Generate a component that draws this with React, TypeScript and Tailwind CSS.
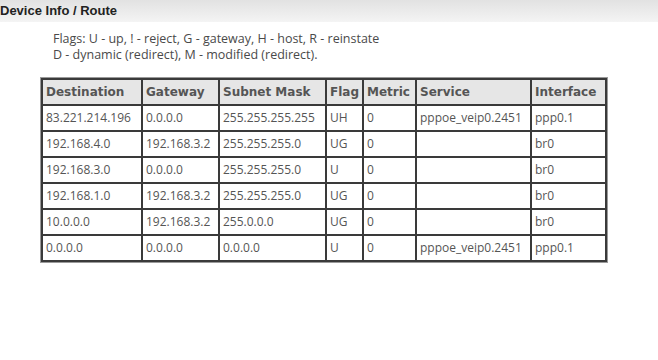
const rows = [
  ['83.221.214.196', '0.0.0.0', '255.255.255.255', 'UH', '0', 'pppoe_veip0.2451', 'ppp0.1'],
  ['192.168.4.0', '192.168.3.2', '255.255.255.0', 'UG', '0', '', 'br0'],
  ['192.168.3.0', '0.0.0.0', '255.255.255.0', 'U', '0', '', 'br0'],
  ['192.168.1.0', '192.168.3.2', '255.255.255.0', 'UG', '0', '', 'br0'],
  ['10.0.0.0', '192.168.3.2', '255.0.0.0', 'UG', '0', '', 'br0'],
  ['0.0.0.0', '0.0.0.0', '0.0.0.0', 'U', '0', 'pppoe_veip0.2451', 'ppp0.1'],
];

const columns = [
  { label: 'Destination', w: 'w-[100px]' },
  { label: 'Gateway', w: 'w-[77px]' },
  { label: 'Subnet Mask', w: 'w-[107px]' },
  { label: 'Flag', w: 'w-[37px]' },
  { label: 'Metric', w: 'w-[53px]' },
  { label: 'Service', w: 'w-[115px]' },
  { label: 'Interface', w: 'w-[75px]' },
];

export default function App() {
  return (
    <div className="w-[658px] h-[360px] bg-white overflow-hidden font-['Open_Sans',sans-serif]">
      {/* page title bar */}
      <div className="h-[22px] bg-gradient-to-b from-[#e2e2e2] to-[#f4f4f4] flex items-center">
        <span className="font-['Liberation_Sans',Arial,sans-serif] font-bold text-[13px] text-[#222]">
          Device Info / Route
        </span>
      </div>

      <div className="pl-[53px] pt-[9px] text-[12.5px] leading-[16px] text-[#4a4a4a]">
        <p>Flags: U - up, ! - reject, G - gateway, H - host, R - reinstate</p>
        <p>D - dynamic (redirect), M - modified (redirect).</p>
      </div>

      <div className="ml-[40px] mt-[14px] w-fit border border-[#9a9a9a]">
        <table className="table-fixed border-collapse text-[12px] text-[#555]">
          <thead>
            <tr className="h-[26px] bg-[#e6e6e6]">
              {columns.map((c) => (
                <th
                  key={c.label}
                  className={`${c.w} border-2 border-[#3a3a3a] px-[3px] text-left font-['DejaVu_Sans',Verdana,sans-serif] font-bold text-[12px] text-[#555] whitespace-nowrap`}
                >
                  {c.label}
                </th>
              ))}
            </tr>
          </thead>
          <tbody>
            {rows.map((r, i) => (
              <tr key={i} className="h-[26px]">
                {r.map((cell, j) => (
                  <td key={j} className="border-2 border-[#3a3a3a] px-[3px] whitespace-nowrap">
                    {cell}
                  </td>
                ))}
              </tr>
            ))}
          </tbody>
        </table>
      </div>
    </div>
  );
}
